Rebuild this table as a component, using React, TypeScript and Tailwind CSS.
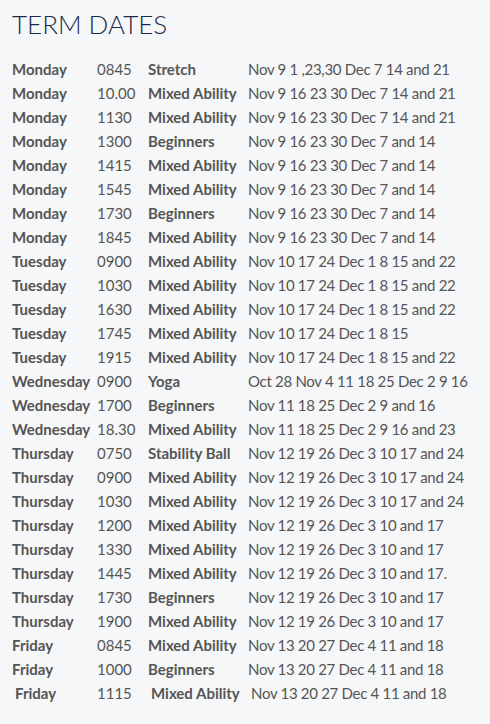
const rows: [string, string, string, string][] = [
  ["Monday", "0845", "Stretch", "Nov 9 1 ,23,30 Dec 7 14 and 21"],
  ["Monday", "10.00", "Mixed Ability", "Nov 9 16 23 30 Dec 7 14 and 21"],
  ["Monday", "1130", "Mixed Ability", "Nov 9 16 23 30 Dec 7 14 and 21"],
  ["Monday", "1300", "Beginners", "Nov 9 16 23 30 Dec 7 and 14"],
  ["Monday", "1415", "Mixed Ability", "Nov 9 16 23 30 Dec 7 and 14"],
  ["Monday", "1545", "Mixed Ability", "Nov 9 16 23 30 Dec 7 and 14"],
  ["Monday", "1730", "Beginners", "Nov 9 16 23 30 Dec 7 and 14"],
  ["Monday", "1845", "Mixed Ability", "Nov 9 16 23 30 Dec 7 and 14"],
  ["Tuesday", "0900", "Mixed Ability", "Nov 10 17 24 Dec 1 8 15 and 22"],
  ["Tuesday", "1030", "Mixed Ability", "Nov 10 17 24 Dec 1 8 15 and 22"],
  ["Tuesday", "1630", "Mixed Ability", "Nov 10 17 24 Dec 1 8 15 and 22"],
  ["Tuesday", "1745", "Mixed Ability", "Nov 10 17 24 Dec 1 8 15"],
  ["Tuesday", "1915", "Mixed Ability", "Nov 10 17 24 Dec 1 8 15 and 22"],
  ["Wednesday", "0900", "Yoga", "Oct 28 Nov 4 11 18 25 Dec 2 9 16"],
  ["Wednesday", "1700", "Beginners", "Nov 11 18 25 Dec 2 9 and 16"],
  ["Wednesday", "18.30", "Mixed Ability", "Nov 11 18 25 Dec 2 9 16 and 23"],
  ["Thursday", "0750", "Stability Ball", "Nov 12 19 26 Dec 3 10 17 and 24"],
  ["Thursday", "0900", "Mixed Ability", "Nov 12 19 26 Dec 3 10 17 and 24"],
  ["Thursday", "1030", "Mixed Ability", "Nov 12 19 26 Dec 3 10 17 and 24"],
  ["Thursday", "1200", "Mixed Ability", "Nov 12 19 26 Dec 3 10 and 17"],
  ["Thursday", "1330", "Mixed Ability", "Nov 12 19 26 Dec 3 10 and 17"],
  ["Thursday", "1445", "Mixed Ability", "Nov 12 19 26 Dec 3 10 and 17."],
  ["Thursday", "1730", "Beginners", "Nov 12 19 26 Dec 3 10 and 17"],
  ["Thursday", "1900", "Mixed Ability", "Nov 12 19 26 Dec 3 10 and 17"],
  ["Friday", "0845", "Mixed Ability", "Nov 13 20 27 Dec 4 11 and 18"],
  ["Friday", "1000", "Beginners", "Nov 13 20 27 Dec 4 11 and 18"],
];

export default function App() {
  return (
    <div
      className="min-h-[724px] w-full bg-[#f5f7f9] px-[12px] pt-[6px] text-[#555555]"
      style={{ fontFamily: "Lato, 'Open Sans', sans-serif" }}
    >
      <h1 className="text-[26px] leading-[36px] font-light text-[#1b2a4b]">TERM DATES</h1>
      <div className="mt-[15px] flex flex-col text-[15px] leading-[24px]">
        {rows.map((r, i) => (
          <div key={i} className="grid grid-cols-[85px_51px_100px_1fr] whitespace-nowrap">
            <span className="font-bold">{r[0]}</span>
            <span>{r[1]}</span>
            <span className="font-bold">{r[2]}</span>
            <span className="tracking-[-0.3px]">{r[3]}</span>
          </div>
        ))}
        <div className="grid grid-cols-[85px_51px_100px_1fr] whitespace-nowrap">
          <span className="pl-[3px] font-bold">Friday</span>
          <span>1115</span>
          <span className="pl-[3px] font-bold">Mixed Ability</span>
          <span className="pl-[3px] tracking-[-0.3px]">Nov 13 20 27 Dec 4 11 and 18</span>
        </div>
      </div>
    </div>
  );
}
